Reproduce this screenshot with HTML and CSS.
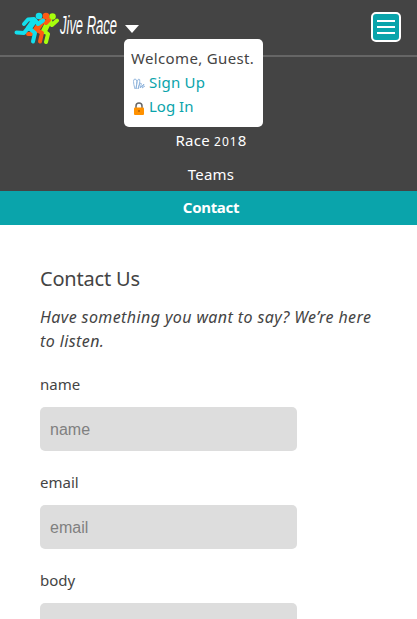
FILE: index.html
```
<!DOCTYPE html>
<html lang="en">
<head>
<meta charset="utf-8">
<meta name="viewport" content="width=device-width, initial-scale=1">
<title>Contact - Jive Race</title>
<link rel="stylesheet" href="styles.css">
</head>
<body>
<header class="header">
  <div class="bar">
    <a class="brand" href="#">
      <svg class="runners" width="46" height="36" viewBox="14 8 46 36" aria-hidden="true">
        <g class="runner lime"><circle cx="52.500" cy="16.500" r="3.300"/><path class="torso" d="M49 21 44 31"/><path d="M50 21 52 25 57 20.500M44 31 48 34 46 42"/></g>
        <g class="runner orange"><circle cx="46" cy="16" r="3.300"/><path class="torso" d="M42 21 36 30"/><path d="M43 20 46 23 49 20M37 30 42 33 40 41.500M34 31 31 34 28 34"/></g>
        <g class="runner cyan"><circle cx="39" cy="16" r="3.300"/><path class="torso" d="M34 21 29 28"/><path d="M34 19 28 19.500 24 24M35 20 38 24 43 20.500M29 28 35 33 33 41.500M28 28 24 33 16.500 32.500"/></g>
      </svg>
      <svg class="wordmark" width="60" height="36" viewBox="0 0 60 36"><text x="2" y="26" textLength="57" lengthAdjust="spacingAndGlyphs">Jive Race</text></svg>
    </a>
    <span class="caret"></span>
    <button class="toggle" aria-label="Menu"><span></span><span></span><span></span></button>
    <div class="user-menu">
      <div class="welcome">Welcome, Guest.</div>
      <a href="#"><svg width="14" height="14" viewBox="0 0 14 14"><path class="sign" d="M3 12Q0 2 3 2T4 12Q5 2 7 2T6 12Q8 5 9 6T8 11L12 7 10 11 13 9"/></svg><span class="signup">Sign Up</span></a>
      <a href="#"><svg width="14" height="14" viewBox="0 0 14 14"><path class="shackle" d="M4 8V5Q4 2 7 2T10 5V8"/><rect class="lock" x="2" y="6.500" width="10" height="7.500" rx="1"/><circle class="keyhole" cx="7" cy="10" r="1"/></svg><span class="login">Log In</span></a>
    </div>
  </div>
  <nav class="nav">
    <a class="race" href="#">Race <span class="digits">201</span>8</a>
    <a class="teams" href="#">Teams</a>
    <a class="active" href="#">Contact</a>
  </nav>
</header>
<main class="main">
  <h1>Contact Us</h1>
  <p>Have something you want to say? We’re here<br>to listen.</p>
  <form>
    <label for="name">name</label>
    <input id="name" placeholder="name">
    <label for="email">email</label>
    <input id="email" type="email" placeholder="email">
    <label for="body">body</label>
    <textarea id="body"></textarea>
  </form>
</main>
</body>
</html>
```
FILE: styles.css
```
* { box-sizing: border-box; }
html { height: 100%; overflow: hidden; }
body { margin: 0; height: 619px; overflow: hidden; color: #444; background: #fff; font: 16px/24px "Noto Sans", sans-serif; }
a { text-decoration: none; color: inherit; }
.header { background: #444; color: #fff; }
.bar { position: relative; display: flex; align-items: center; height: 57px; padding: 0 16px 1px 14px; border-bottom: 2px solid #666; }
.brand { display: flex; align-items: center; margin-top: -2px; }
.runner { fill: none; stroke-width: 4; stroke-linecap: round; stroke-linejoin: round; }
.runner circle { stroke: none; }
.runner .torso { stroke-width: 6; }
.cyan { stroke: #13dfed; }
.cyan circle { fill: #13dfed; }
.orange { stroke: #ff5a13; }
.orange circle { fill: #ff5a13; }
.lime { stroke: #a7ff0c; }
.lime circle { fill: #a7ff0c; }
.wordmark { overflow: visible; fill: #fff; margin-left: -2px; font: italic 25px "Liberation Sans", sans-serif; }
.caret { margin: 4px 0 0 7px; border: solid transparent; border-width: 8px 7px 0; border-top-color: #fff; }
.toggle { display: flex; flex-direction: column; justify-content: center; gap: 4px; width: 30px; height: 30px; margin-left: auto; padding: 0 4px; background: #0aa4ab; border: 2px solid #fff; border-radius: 5px; }
.toggle span { height: 2px; background: #fff; }
.user-menu { position: absolute; left: 124px; top: 39px; z-index: 1; width: 139px; height: 88px; padding: 7px 0 8px 7px; color: #444; background: #fff; border-radius: 5px; white-space: nowrap; }
.user-menu a { display: flex; align-items: center; color: #0aa4ab; gap: 4px; }
.user-menu svg { fill: none; margin: 3px -1px 0 1px; }
.welcome { font-size: 15px; letter-spacing: .35px; }
.signup { font-size: 15px; letter-spacing: .2px; }
.login { font-size: 15px; }
.sign { stroke: #8bb1da; stroke-width: .9; }
.shackle { stroke: #666; stroke-width: 1.500; }
.lock { fill: #ff9100; }
.keyhole { fill: #b86200; }
.nav { padding-top: 66px; text-align: center; }
.nav a { display: block; height: 34px; line-height: 35px; font-size: 15px; }
.nav .race { padding-left: 5px; letter-spacing: .25px; }
.nav .teams { padding-left: 5px; letter-spacing: .2px; }
.nav .active { padding-left: 5px; line-height: 32px; background: #0aa4ab; font-weight: bold; letter-spacing: -.3px; }
.digits { font-size: 12px; letter-spacing: 1px; }
.main { padding: 42px 40px 0; }
h1 { margin: 0 0 14px; font-size: 20px; line-height: 24px; font-weight: normal; letter-spacing: -.2px; }
p { margin: 0 0 19px; font-style: italic; white-space: nowrap; letter-spacing: .4px; }
label { display: block; margin-bottom: 11px; font-size: 15px; }
input, textarea { display: block; width: 257px; height: 44px; margin: 0 0 19px; padding: 11px 10px 9px; border: 0; border-radius: 5px; background: #ddd; font: 16px "Liberation Sans", sans-serif; resize: none; }
textarea { height: 120px; }
::placeholder { color: #808080; }
```
